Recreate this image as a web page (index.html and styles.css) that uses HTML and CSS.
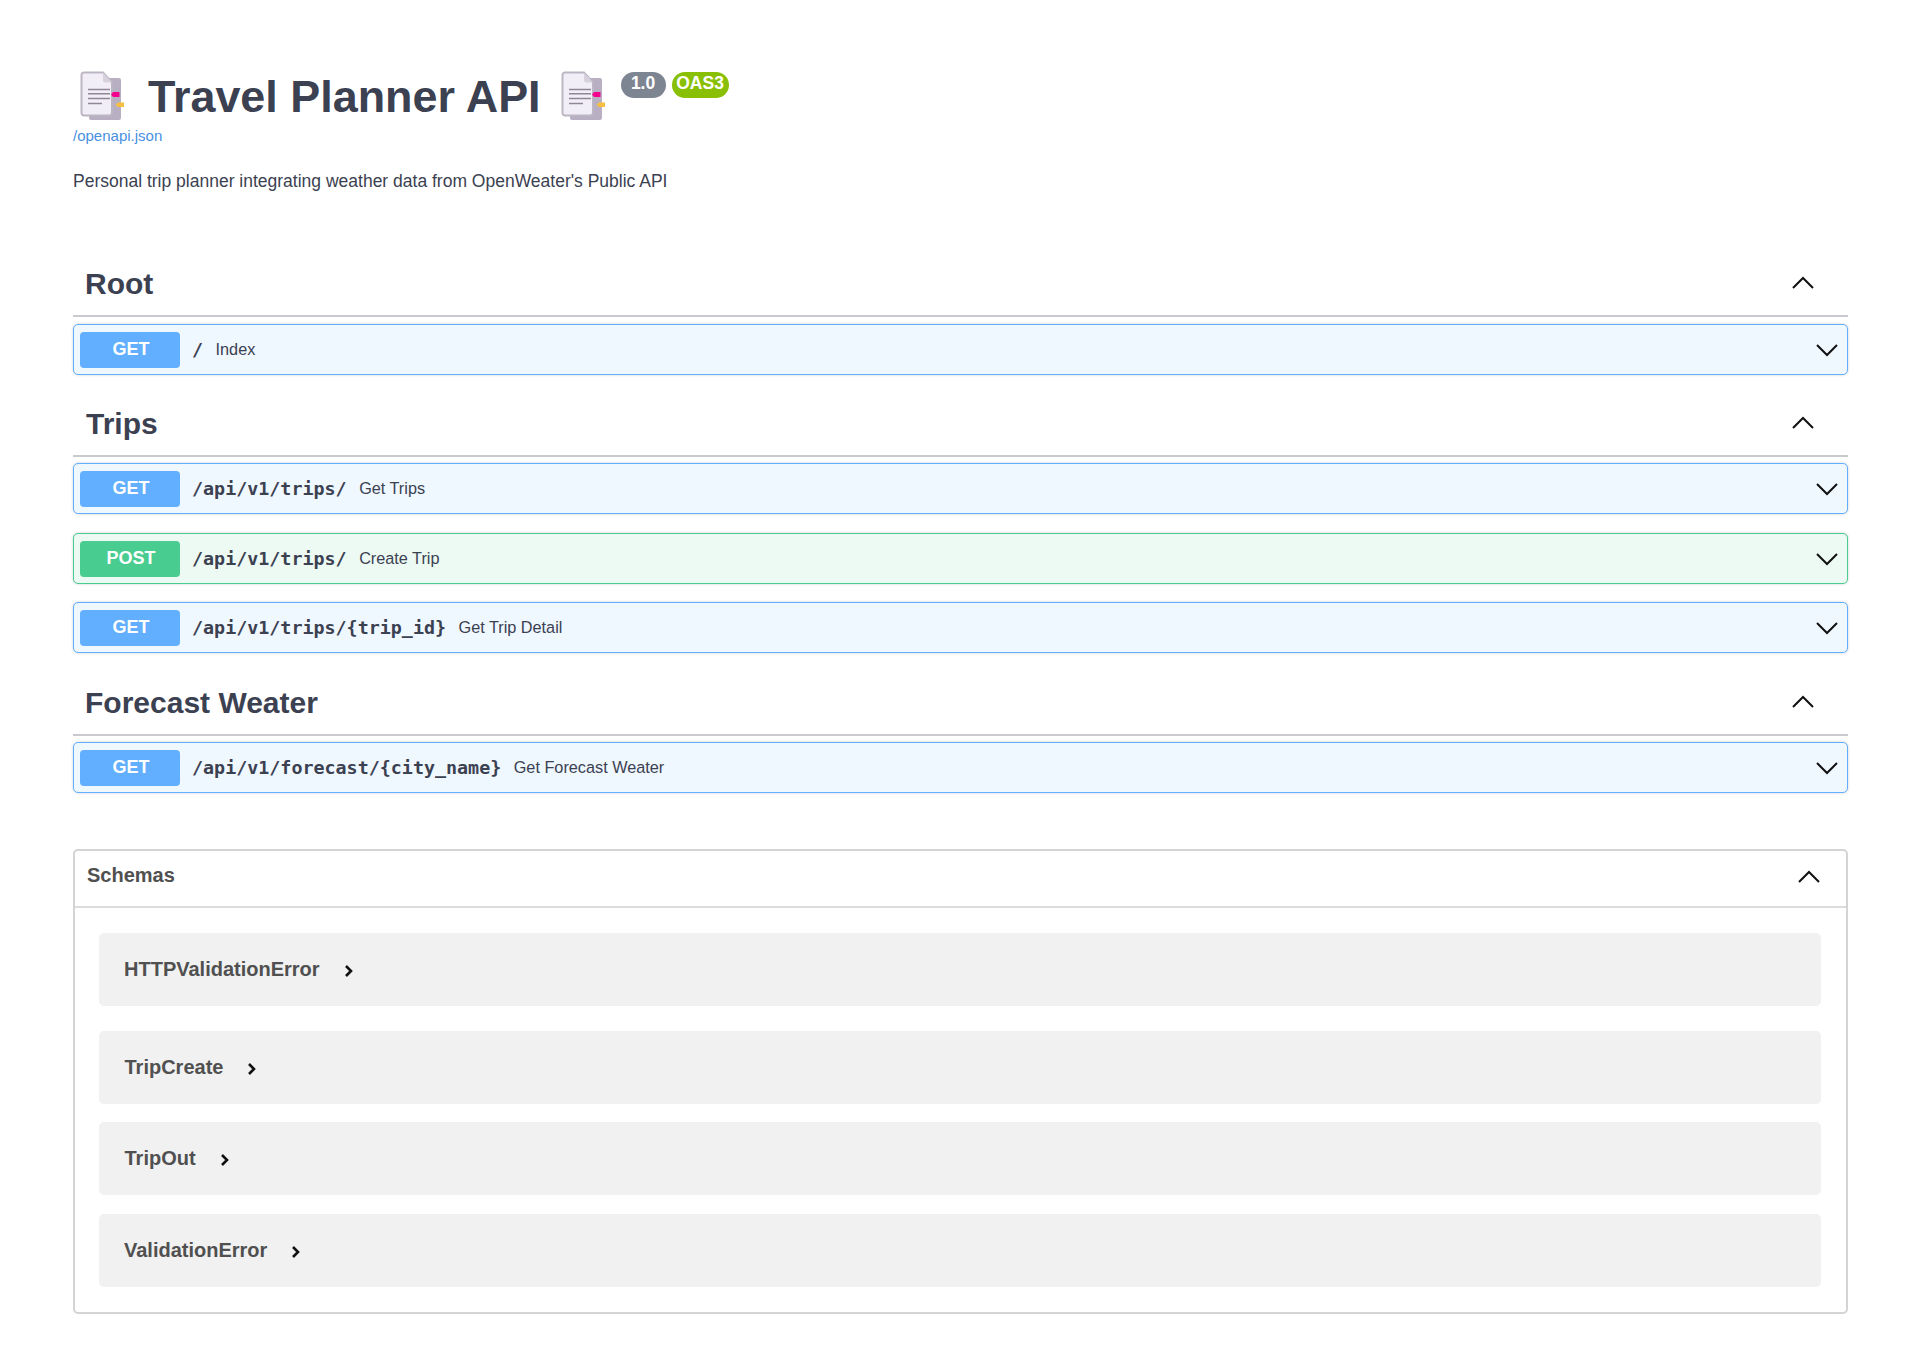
FILE: index.html
```html
<!DOCTYPE html>
<html lang="en">
<head>
<meta charset="utf-8">
<title>Travel Planner API</title>
<link rel="stylesheet" href="styles.css">
</head>
<body>
<svg class="defs" width="0" height="0" aria-hidden="true">
  <symbol id="doc" viewBox="0 0 44 50">
    <path d="M9 7h30a2 2 0 0 1 2 2v38a2 2 0 0 1-2 2H11a2 2 0 0 1-2-2z" fill="#b8b0c2"/>
    <path d="M4 1.500h19l9 10V42a2.500 2.500 0 0 1-2.500 2.500H4A2.500 2.500 0 0 1 1.500 42V4A2.500 2.500 0 0 1 4 1.500z" fill="#f2eef8" stroke="#bcb6c4" stroke-width="2"/>
    <path d="M23 1.500V9a2.500 2.500 0 0 0 2.500 2.500H32z" fill="#d6d1dc"/>
    <path d="M8 18.500h22M8 22.800h22M8 27.500h22M8 32.500h14" stroke="#8f8797" stroke-width="1.400"/>
    <path d="M33 21h6.500v5H33l-2-2.500z" fill="#f5038f"/>
    <path d="M38 31.500h6v4.500h-6l-2.500-2.200z" fill="#f7bf3f"/>
  </symbol>
  <symbol id="up" viewBox="0 0 22 14"><path d="M1 13 11 3l10 10" fill="none" stroke="#111" stroke-width="2"/></symbol>
  <symbol id="down" viewBox="0 0 22 14"><path d="M1 2l10 10L21 2" fill="none" stroke="#111" stroke-width="2"/></symbol>
  <symbol id="right" viewBox="0 0 10 14"><path d="M2 2l5 5-5 5" fill="none" stroke="#111" stroke-width="2.600"/></symbol>
</svg>
<main class="page">
  <header class="info">
    <div class="title-row">
      <svg class="doc"><use href="#doc"/></svg>
      <h1 class="title">Travel Planner API</h1>
      <svg class="doc doc-after"><use href="#doc"/></svg>
      <div class="badges">
        <span class="badge badge-version">1.0</span>
        <span class="badge badge-oas">OAS3</span>
      </div>
    </div>
    <a class="spec-link" href="#">/openapi.json</a>
    <p class="description">Personal trip planner integrating weather data from OpenWeater's Public API</p>
  </header>

  <section class="tag">
    <div class="tag-head"><h2 class="tag-name">Root</h2><svg class="chev-up"><use href="#up"/></svg></div>
    <div class="op op-get op-root"><span class="method method-get">GET</span><span class="path">/</span><span class="summary">Index</span><svg class="chev-down"><use href="#down"/></svg></div>
  </section>

  <section class="tag">
    <div class="tag-head"><h2 class="tag-name tag-name-indent">Trips</h2><svg class="chev-up"><use href="#up"/></svg></div>
    <div class="op op-get"><span class="method method-get">GET</span><span class="path">/api/v1/trips/</span><span class="summary">Get Trips</span><svg class="chev-down"><use href="#down"/></svg></div>
    <div class="op op-post"><span class="method method-post">POST</span><span class="path">/api/v1/trips/</span><span class="summary">Create Trip</span><svg class="chev-down"><use href="#down"/></svg></div>
    <div class="op op-get"><span class="method method-get">GET</span><span class="path">/api/v1/trips/{trip_id}</span><span class="summary">Get Trip Detail</span><svg class="chev-down"><use href="#down"/></svg></div>
  </section>

  <section class="tag">
    <div class="tag-head"><h2 class="tag-name">Forecast Weater</h2><svg class="chev-up"><use href="#up"/></svg></div>
    <div class="op op-get"><span class="method method-get">GET</span><span class="path">/api/v1/forecast/{city_name}</span><span class="summary">Get Forecast Weater</span><svg class="chev-down"><use href="#down"/></svg></div>
  </section>

  <section class="schemas">
    <div class="schemas-head"><h3 class="schemas-title">Schemas</h3><svg class="chev-up"><use href="#up"/></svg></div>
    <div class="model-list">
      <div class="model model-first"><span class="model-name">HTTPValidationError</span><svg class="chev-right"><use href="#right"/></svg></div>
      <div class="model model-indent"><span class="model-name">TripCreate</span><svg class="chev-right"><use href="#right"/></svg></div>
      <div class="model model-indent"><span class="model-name">TripOut</span><svg class="chev-right"><use href="#right"/></svg></div>
      <div class="model"><span class="model-name">ValidationError</span><svg class="chev-right"><use href="#right"/></svg></div>
    </div>
  </section>
</main>
</body>
</html>
```
FILE: styles.css
```css
* { box-sizing: border-box; }
html, body { margin: 0; background: #fff; }
body { font-family: "Liberation Sans", Arial, sans-serif; color: #3b4151; }
.defs { display: block; height: 0; }
.page { width: 1775px; margin-left: 73px; padding-top: 70px; height: 1350px; }

.info { display: flex; flex-direction: column; }
.title-row { display: flex; align-items: flex-start; height: 57px; padding-left: 7px; }
.doc { width: 44px; height: 50px; flex: none; margin-top: 1px; }
.title { margin: -3px 0 0 24px; font-size: 44.900px; line-height: 60px; font-weight: 700; white-space: nowrap; }
.doc-after { margin-left: 20px; }
.badges { display: flex; gap: 6px; margin: 2px 0 0 16px; }
.badge { height: 26px; border-radius: 13px; color: #fff; font-size: 17.500px; font-weight: 700; line-height: 23px; text-align: center; }
.badge-version { width: 45px; background: #7d8492; }
.badge-oas { width: 57px; background: #89bf04; }
.spec-link { font-size: 15px; line-height: 17px; color: #4990e2; text-decoration: none; }
.description { margin: 26px 0 0; font-size: 17.500px; line-height: 22px; }

.tag { display: flex; flex-direction: column; }
.tag-head { display: flex; align-items: center; justify-content: space-between; height: 63px; padding: 0 34.500px 2px 12px; border-bottom: 2px solid #c9cace; }
.tag-name { margin: 0; font-size: 30px; font-weight: 700; line-height: 34px; }
.tag-name-indent { margin-left: 1px; }
.chev-up { width: 22px; height: 14px; flex: none; margin-bottom: 4px; }

.op { display: flex; align-items: center; height: 51px; margin-top: 6px; padding: 0 9px 0 6px; border: 1px solid; border-radius: 5px; box-shadow: 0 0 3px rgba(0, 0, 0, .19); }
.op-root { margin-top: 7px; }
.op + .op { margin-top: 18px; }
.op-get + .op-post { margin-top: 19px; }
.op-get { background: #eff7ff; border-color: #61affe; }
.op-post { background: #edfaf4; border-color: #49cc90; }
.method { width: 100px; height: 36px; flex: none; padding-left: 2px; border-radius: 4px; color: #fff; font-size: 18px; font-weight: 700; line-height: 35px; text-align: center; }
.method-get { background: #61affe; }
.method-post { background: #49cc90; }
.path { margin-left: 12px; font-family: "DejaVu Sans Mono", monospace; font-size: 18.350px; font-weight: 700; }
.summary { flex: 1; margin-left: 12.500px; font-size: 16.250px; }
.chev-down { width: 22px; height: 14px; flex: none; }

.tag:nth-of-type(1) { margin-top: 62px; }
.tag + .tag { margin-top: 19px; }
.tag:nth-of-type(3) { margin-top: 20px; }

.schemas { height: 465px; margin-top: 56px; border: 2px solid #d3d4d6; border-radius: 5px; }
.schemas-head { display: flex; align-items: center; justify-content: space-between; height: 57px; padding: 0 26.500px 6px 12px; border-bottom: 2px solid #dcdcdd; }
.schemas-title { margin: 0; font-size: 20px; font-weight: 700; color: #505050; }
.schemas-head .chev-up { margin: 0; }
.model-list { display: flex; flex-direction: column; gap: 19px; padding: 25px 25px 0 24px; }
.model { display: flex; align-items: center; gap: 24px; height: 73px; padding-left: 25px; background: #f1f1f1; border-radius: 5px; }
.model-first { margin-bottom: 6px; }
.model-indent { padding-left: 25.500px; }
.model-indent + .model-indent { margin-top: -1px; }
.model-name { font-size: 20px; font-weight: 700; color: #505050; }
.chev-right { width: 10px; height: 14px; flex: none; margin-top: 2px; }
```
